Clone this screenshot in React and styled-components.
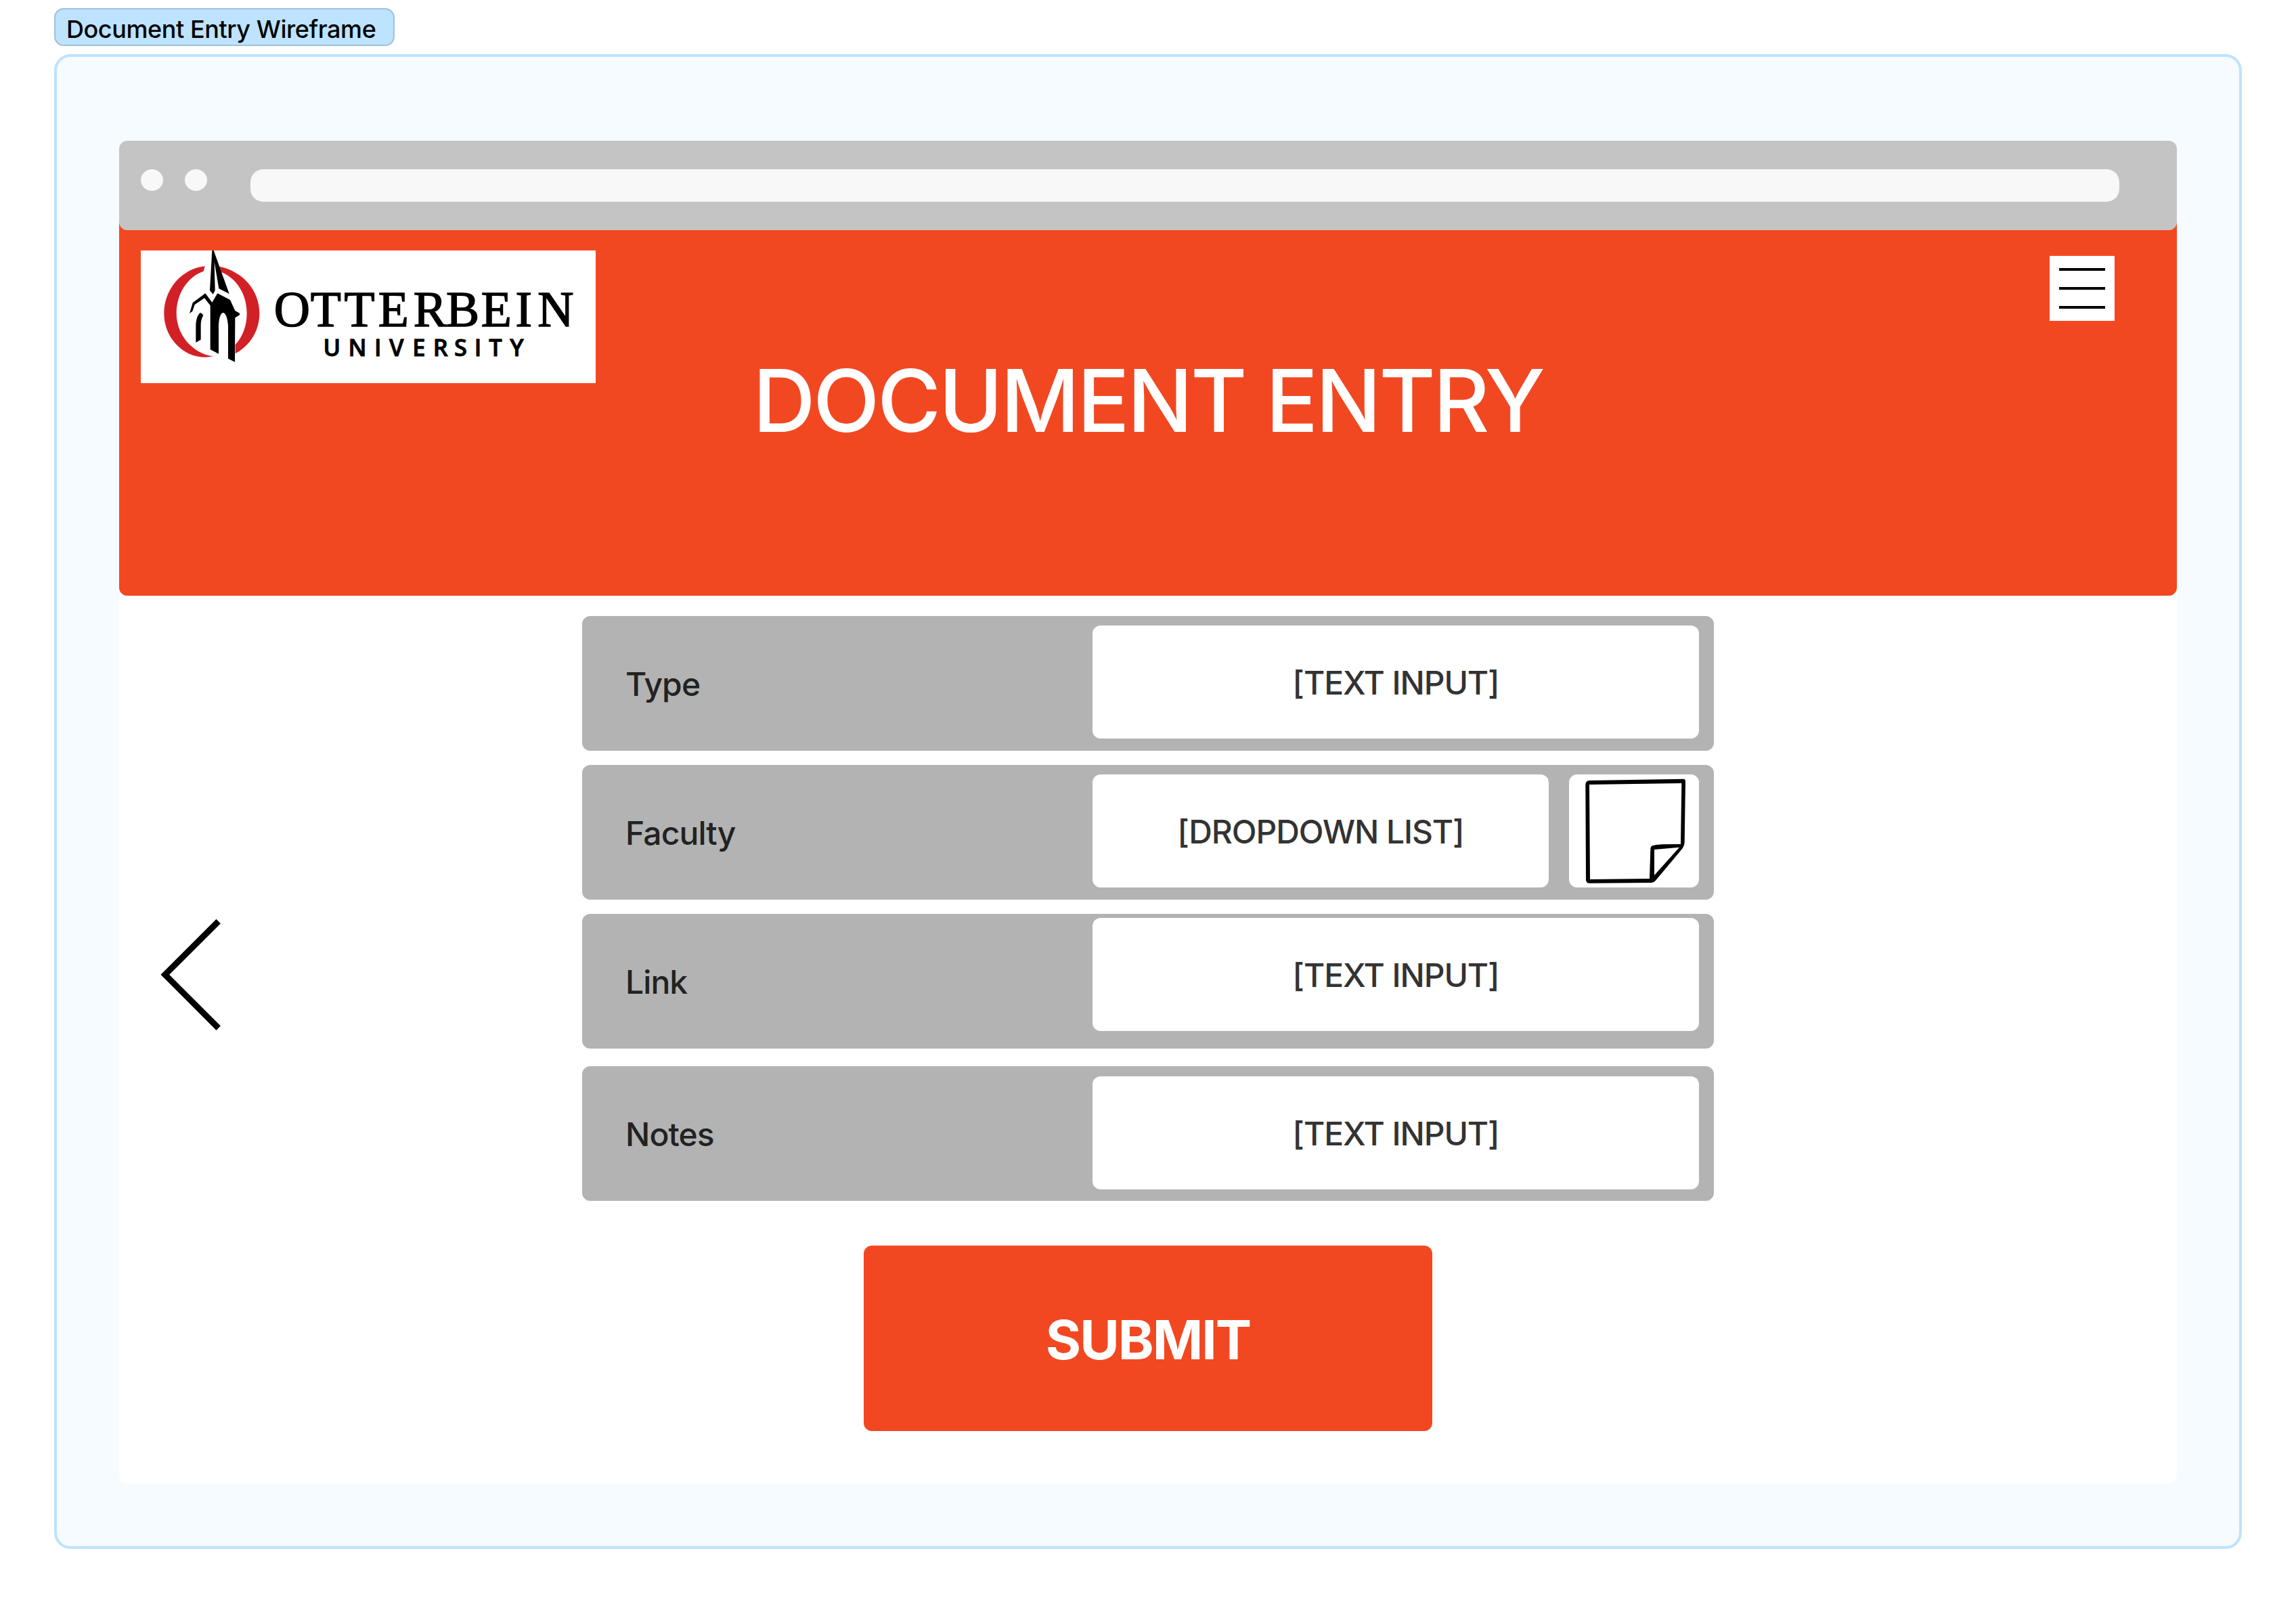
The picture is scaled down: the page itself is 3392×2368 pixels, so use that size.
import React from "react";
import styled, { createGlobalStyle } from "styled-components";

const GlobalStyle = createGlobalStyle`
  *, *::before, *::after { box-sizing: border-box; }
  body {
    margin: 0;
    background: #ffffff;
    font-family: Inter, "Liberation Sans", sans-serif;
  }
`;

const Page = styled.main`
  display: flex;
  flex-direction: column;
  align-items: flex-start;
  gap: 12px;
  width: 3392px;
  height: 2368px;
  padding: 12px 80px 80px;
`;

const SectionLabel = styled.div`
  width: 503px;
  height: 56px;
  padding-left: 16px;
  border: 2px solid #9fc1da;
  border-radius: 14px;
  background: #bde3ff;
  color: #000000;
  font-size: 36px;
  font-weight: 500;
  letter-spacing: -0.012em;
  line-height: 58px;
  white-space: nowrap;
`;

const Section = styled.section`
  width: 3232px;
  height: 2208px;
  padding: 124px 92px;
  border: 4px solid #bde3ff;
  border-radius: 24px;
  background: #f5fbff;
`;

const BrowserWindow = styled.div`
  display: flex;
  flex-direction: column;
  height: 1984px;
  border-radius: 12px;
  background: #ffffff;
`;

const BrowserBar = styled.div`
  position: relative;
  z-index: 1;
  display: flex;
  flex: none;
  align-items: flex-start;
  gap: 32px;
  height: 132px;
  padding: 42px 85px 0 32px;
  border-radius: 12px;
  background: #c4c4c4;
`;

const WindowDot = styled.span`
  flex: none;
  width: 33px;
  height: 32px;
  border-radius: 50%;
  background: #f8f8f8;
`;

const AddressBar = styled.div`
  flex: 1;
  height: 48px;
  margin-left: 32px;
  border-radius: 19px;
  background: #f8f8f8;
`;

const Banner = styled.header`
  display: grid;
  flex: none;
  grid-template-columns: 672px 1fr 672px;
  align-items: start;
  height: 564px;
  margin-top: -24px;
  padding: 54px 32px 0;
  border-radius: 12px;
  background: #f24822;
`;

const LogoCard = styled.div`
  height: 195.5px;
  background: #ffffff;

  svg { display: block; }
`;

const Title = styled.h1`
  margin: 158px 0 0;
  color: #ffffff;
  font-size: 128px;
  font-weight: 500;
  letter-spacing: -0.026em;
  line-height: 128px;
  text-align: center;
  white-space: nowrap;
`;

const MenuButton = styled.button`
  display: flex;
  flex-direction: column;
  justify-content: space-between;
  justify-self: end;
  width: 96px;
  height: 96px;
  margin: 8px 60px 0 0;
  padding: 18px 14px;
  border: 0;
  background: #ffffff;
`;

const MenuLine = styled.span`
  height: 4px;
  background: #000000;
`;

const Body = styled.div`
  display: grid;
  grid-template-columns: 684px 1672px 684px;
  align-items: start;
`;

const BackButton = styled.button`
  margin: 476px 0 0 60px;
  padding: 0;
  border: 0;
  background: none;
  justify-self: start;

  svg { display: block; }
`;

const Form = styled.form`
  display: flex;
  flex-direction: column;
  align-items: center;
  padding-top: 30px;
`;

const Row = styled.div`
  display: flex;
  align-items: flex-start;
  width: 100%;
  height: 199px;
  margin-bottom: ${(p) => p.$after}px;
  padding: ${(p) => p.$inset}px 22px 0 64px;
  border-radius: 12px;
  background: #b3b3b3;
`;

const RowLabel = styled.label`
  width: 690px;
  margin-top: ${(p) => 77 - p.$inset}px;
  color: #222222;
  font-size: 48px;
  font-weight: 500;
  letter-spacing: -0.019em;
  line-height: 48px;
`;

const Field = styled.div`
  display: flex;
  flex: 1;
  align-items: center;
  justify-content: center;
  height: 167px;
  padding-top: 3px;
  border-radius: 12px;
  background: #ffffff;
  color: #333333;
  font-size: 48px;
  font-weight: 500;
  letter-spacing: -0.023em;
  line-height: 48px;
  white-space: nowrap;
`;

const NoteButton = styled.button`
  width: 192px;
  height: 167px;
  margin-left: 30px;
  padding: 0;
  border: 0;
  border-radius: 12px;
  background: #ffffff;

  svg { display: block; }
`;

const SubmitButton = styled.button`
  width: 840px;
  height: 274px;
  margin-top: 41px;
  padding: 4px 0 0;
  border: 0;
  border-radius: 12px;
  background: #f24822;
  color: #ffffff;
  font-family: inherit;
  font-size: 80px;
  font-weight: 700;
  letter-spacing: -0.025em;
  line-height: 80px;
`;

const LogoName = styled.text`
  font-family: "Liberation Serif", serif;
  font-size: 73.8px;
  fill: #000000;
  stroke: #000000;
  stroke-width: 1.5px;
  text-anchor: middle;
`;

const LogoSubname = styled.text`
  font-family: "Open Sans", sans-serif;
  font-size: 34.5px;
  font-weight: 600;
  fill: #000000;
  stroke: #000000;
  stroke-width: 0.9px;
  text-anchor: middle;
`;

function OtterbeinLogo() {
  return (
    <svg width="672" height="195.5" viewBox="208 370 672 195.5">
      <g transform="translate(220 360) scale(0.33333)">
        <path
          fill="#d22027"
          d="M248 100C148 110 67 200 67 308C67 416 150 503 248 503Q268 503 285 499C195 488 122 405 122 308C122 222 172 145 242 122Z"
        />
        <path
          fill="#d22027"
          d="M312 101C415 122 490 205 490 308C490 385 450 450 383 487L383 447C416 412 434 362 434 308C434 230 393 155 321 126Z"
        />
        <path d="M280 30L287 30L356 222L310 199L290 80L293 207L284 224L270 207Z" />
        <path d="M180 309L194 262L250 220L280 260L304 220L360 249L382 297L402 308L402 316L382 328L381 524L351 509L351 365C349 330 340 306 329 306C318 306 309 330 309 370L309 488L272 469L272 274L246 241L203 270L193 299Z" />
        <path d="M228 306Q236 308 241 317C233 332 230 345 230 368L230 425L208 438L208 365C208 335 217 313 228 306Z" />
      </g>
      <LogoName y="481.8" x="431.3 481.2 531 581.2 635.3 683.5 733.2 773.7 820.8">
        OTTERBEIN
      </LogoName>
      <LogoSubname y="525.6" x="490.4 527.9 558.3 585.7 619 650.8 680.4 706 732 763.4">
        UNIVERSITY
      </LogoSubname>
    </svg>
  );
}

function ChevronLeft() {
  return (
    <svg width="92" height="168" viewBox="236 1356 92 168">
      <path d="M322.7 1361L243.8 1439.8L322.7 1518.7" fill="none" stroke="#000000" strokeWidth="9" />
    </svg>
  );
}

function StickyNote() {
  return (
    <svg width="192" height="167" viewBox="354 132 576 501">
      <path
        fillRule="evenodd"
        d="M445 159L860 152Q870 152 870 162L866 435Q864 452 852 466L737 603Q729 612 716 612L445 614Q430 614 429 599L427 178Q427 160 445 159Z M444 177L853 171L849 441L765 442Q735 444 724 448Q715 452 715 462L711 594L447 597Z M732 465L843 455L732 579Z"
      />
    </svg>
  );
}

const rows = [
  { label: "Type", value: "[TEXT INPUT]", inset: 14, after: 21 },
  { label: "Faculty", value: "[DROPDOWN LIST]", inset: 14, after: 21, note: true },
  { label: "Link", value: "[TEXT INPUT]", inset: 6, after: 26 },
  { label: "Notes", value: "[TEXT INPUT]", inset: 15, after: 25 },
];

export default function App() {
  return (
    <>
      <GlobalStyle />
      <Page>
        <SectionLabel>Document Entry Wireframe</SectionLabel>
        <Section>
          <BrowserWindow>
            <BrowserBar>
              <WindowDot />
              <WindowDot />
              <AddressBar />
            </BrowserBar>
            <Banner>
              <LogoCard>
                <OtterbeinLogo />
              </LogoCard>
              <Title>DOCUMENT ENTRY</Title>
              <MenuButton aria-label="Menu">
                <MenuLine />
                <MenuLine />
                <MenuLine />
              </MenuButton>
            </Banner>
            <Body>
              <BackButton aria-label="Back">
                <ChevronLeft />
              </BackButton>
              <Form>
                {rows.map((row) => (
                  <Row key={row.label} $inset={row.inset} $after={row.after}>
                    <RowLabel $inset={row.inset}>{row.label}</RowLabel>
                    <Field>{row.value}</Field>
                    {row.note && (
                      <NoteButton type="button" aria-label="Note">
                        <StickyNote />
                      </NoteButton>
                    )}
                  </Row>
                ))}
                <SubmitButton type="button">SUBMIT</SubmitButton>
              </Form>
            </Body>
          </BrowserWindow>
        </Section>
      </Page>
    </>
  );
}
